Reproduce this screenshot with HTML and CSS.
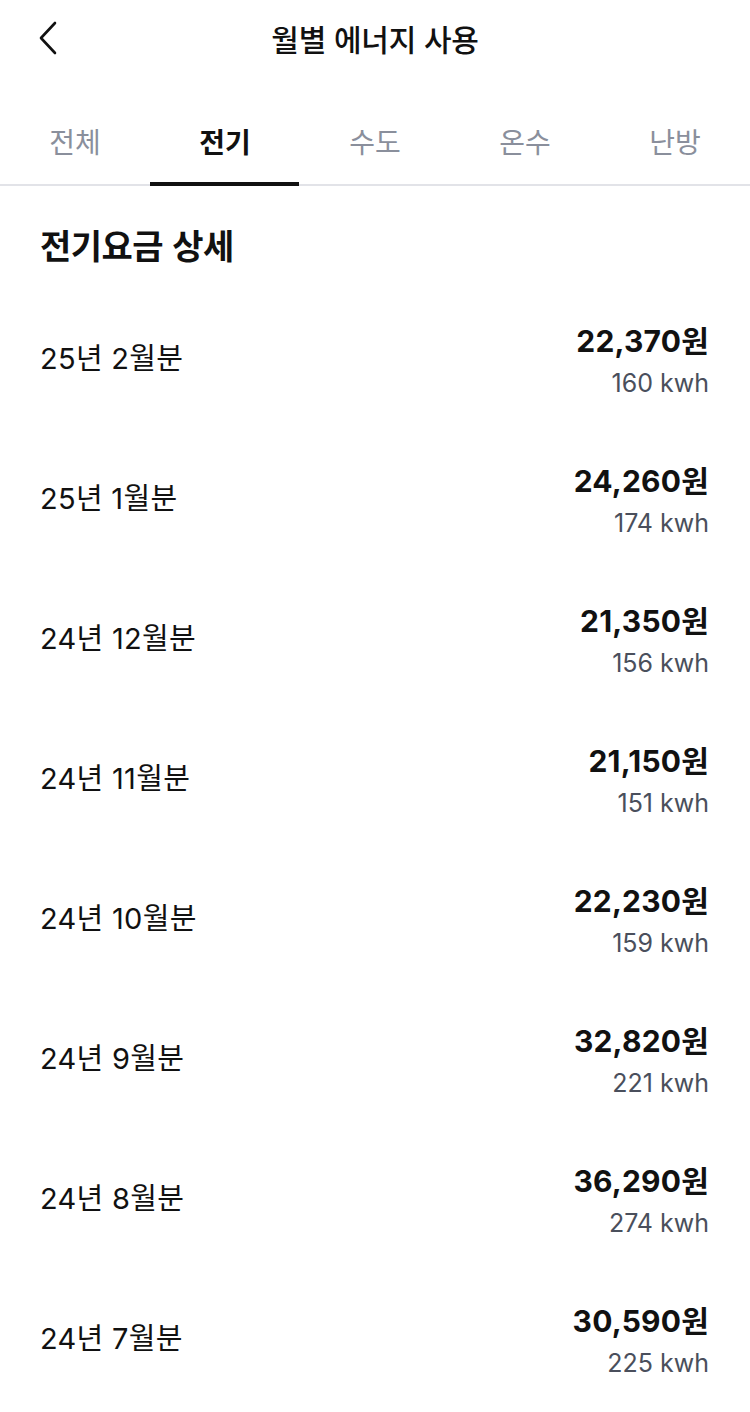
FILE: index.html
```html
<!DOCTYPE html>
<html lang="ko">
<head>
<meta charset="utf-8">
<title>월별 에너지 사용</title>
<link rel="stylesheet" href="styles.css">
</head>
<body>
<div class="page">
  <header class="topbar">
    <button class="back" aria-label="뒤로">
      <svg width="22" height="34" viewBox="0 0 22 34"><path d="M18 2 L4 17 L18 32" fill="none" stroke="#111" stroke-width="2.6" stroke-linecap="round" stroke-linejoin="round"/></svg>
    </button>
    <h1 class="title">월별 에너지 사용</h1>
  </header>
  <nav class="tabs">
    <div class="tab">전체</div>
    <div class="tab active">전기</div>
    <div class="tab">수도</div>
    <div class="tab">온수</div>
    <div class="tab">난방</div>
  </nav>
  <h2 class="section-title">전기요금 상세</h2>
  <ul class="list">
    <li class="row"><span class="label">25년 2월분</span><div class="vals"><span class="amount">22,370원</span><span class="usage">160 kwh</span></div></li>
    <li class="row"><span class="label">25년 1월분</span><div class="vals"><span class="amount">24,260원</span><span class="usage">174 kwh</span></div></li>
    <li class="row"><span class="label">24년 12월분</span><div class="vals"><span class="amount">21,350원</span><span class="usage">156 kwh</span></div></li>
    <li class="row"><span class="label">24년 11월분</span><div class="vals"><span class="amount">21,150원</span><span class="usage">151 kwh</span></div></li>
    <li class="row"><span class="label">24년 10월분</span><div class="vals"><span class="amount">22,230원</span><span class="usage">159 kwh</span></div></li>
    <li class="row"><span class="label">24년 9월분</span><div class="vals"><span class="amount">32,820원</span><span class="usage">221 kwh</span></div></li>
    <li class="row"><span class="label">24년 8월분</span><div class="vals"><span class="amount">36,290원</span><span class="usage">274 kwh</span></div></li>
    <li class="row"><span class="label">24년 7월분</span><div class="vals"><span class="amount">30,590원</span><span class="usage">225 kwh</span></div></li>
  </ul>
</div>
</body>
</html>
```
FILE: styles.css
```css
* { box-sizing: border-box; }
html, body { margin: 0; padding: 0; background: #fff; }
body {
  font-family: "Noto Sans CJK KR", "Noto Sans", sans-serif;
  color: #111;
}
.page { width: 750px; }
.topbar {
  height: 76px;
  display: flex;
  align-items: center;
  justify-content: center;
  position: relative;
}
.back {
  position: absolute;
  left: 37px;
  top: 21px;
  border: 0;
  background: none;
  padding: 0;
  width: 22px;
  height: 34px;
}
.back svg { display: block; }
.title {
  margin: 0;
  font-size: 30px;
  font-weight: 500;
  letter-spacing: -0.3px;
  line-height: 40px;
}
.tabs {
  margin-top: 24px;
  display: flex;
  height: 86px;
  border-bottom: 2px solid #e2e3e8;
}
.tab {
  flex: 1;
  display: flex;
  align-items: center;
  justify-content: center;
  font-size: 28px;
  color: #8a8f9c;
  position: relative;
  padding-bottom: 2px;
}
.tab.active {
  color: #111;
  font-weight: 700;
}
.tab.active::after {
  content: "";
  position: absolute;
  left: 0;
  right: 1px;
  bottom: -2px;
  height: 4px;
  background: #111;
}
.section-title {
  margin: 39px 0 25px 40px;
  font-size: 34px;
  font-weight: 700;
  line-height: 40px;
  letter-spacing: -0.5px;
}
.list { list-style: none; margin: 0; padding: 0; }
.row {
  height: 140px;
  display: flex;
  align-items: center;
  justify-content: space-between;
  padding: 0 41px 0 40px;
}
.label {
  font-family: "Inter", "Noto Sans CJK KR", sans-serif;
  font-size: 29px;
  line-height: 40px;
  letter-spacing: 0.3px;
  margin-top: -3px;
}
.vals {
  display: flex;
  flex-direction: column;
  align-items: flex-end;
  padding-top: 6px;
}
.amount {
  font-family: "Inter", "Noto Sans CJK KR", sans-serif;
  font-size: 30px;
  font-weight: 700;
  line-height: 40px;
  letter-spacing: 0.2px;
}
.usage {
  font-family: "Inter", "Noto Sans CJK KR", sans-serif;
  font-size: 25px;
  line-height: 44px;
  color: #4a4f5c;
}
```
